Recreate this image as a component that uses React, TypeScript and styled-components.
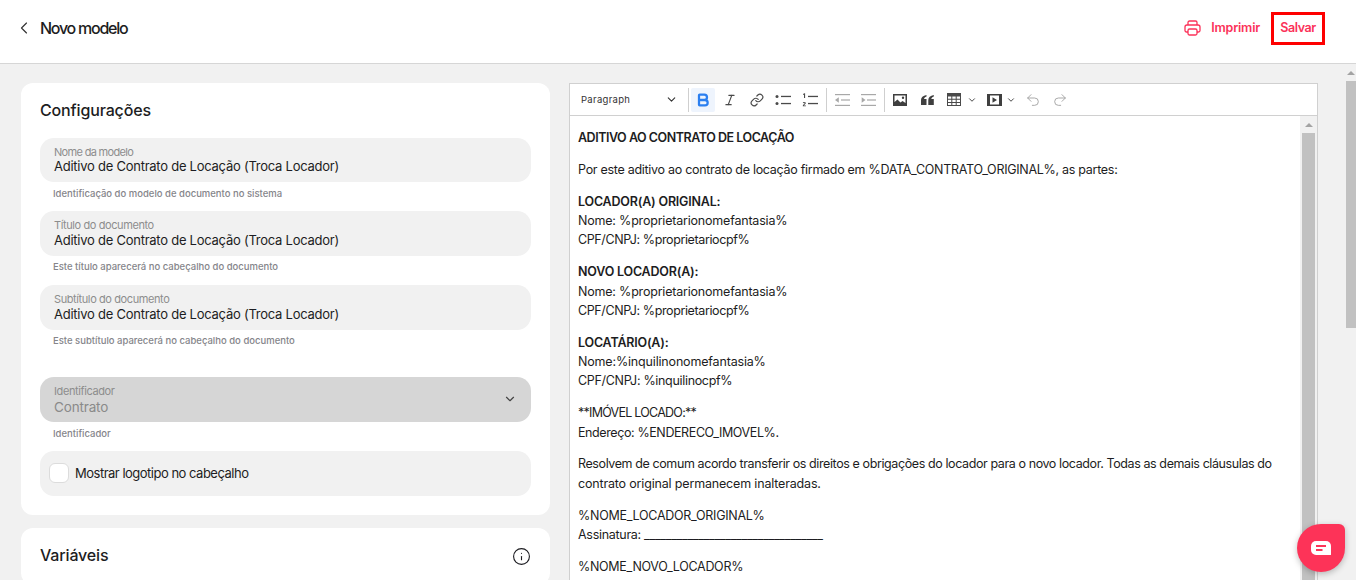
import React from "react";
import styled, { createGlobalStyle } from "styled-components";
import { ChevronLeft, ChevronDown, Info, Bold, Italic, Link, Undo2, Redo2 } from "lucide-react";

const Global = createGlobalStyle`
  html, body { margin: 0; padding: 0; height: 580px; overflow: hidden; background: #fff; }
  body { font-family: Inter, "Noto Sans", sans-serif; color: #1d1d22; }
  * { box-sizing: border-box; }
`;

const Shell = styled.div`
  width: 1356px; height: 580px; display: flex; flex-direction: column; overflow: hidden; position: relative;
`;
const Header = styled.header`
  height: 64px; flex: none; background: #fff; border-bottom: 1px solid #d6d6d6;
  display: flex; align-items: center; justify-content: space-between; padding: 0 31px 7px 14px;
`;
const HeaderLeft = styled.div`display: flex; align-items: center; gap: 6px;`;
const PageTitle = styled.h1`margin: 0; font-size: 16px; font-weight: 500; letter-spacing: -1.25px;`;
const HeaderRight = styled.div`display: flex; align-items: center; gap: 11px;`;
const PrintLink = styled.div`
  display: flex; align-items: center; gap: 10px; color: #fb3259; font-size: 12.5px; font-weight: 600; letter-spacing: -0.2px; padding-bottom: 1px;
`;
const SaveButton = styled.div`
  width: 54px; height: 33px; border: 3px solid #fe0000; display: flex; align-items: center; justify-content: center;
  color: #fb3259; font-size: 12.5px; font-weight: 600; letter-spacing: -0.4px; padding-bottom: 1px;
`;
const Body = styled.div`flex: 1; min-height: 0; display: flex; background: #f1f1f1;`;
const Content = styled.div`
  flex: 1; min-width: 0; display: flex; gap: 19px; padding: 19px 28px 0 21px; overflow: hidden;
`;
const LeftColumn = styled.div`width: 529px; flex: none; display: flex; flex-direction: column; gap: 13px;`;
const Card = styled.section`
  background: #fff; border-radius: 12px; padding: 18px 19px 19px;
`;
const CardTitle = styled.h2<{ $mb?: number }>`
  margin: 0 0 ${(p) => p.$mb ?? 0}px; font-size: 16px; font-weight: 500; letter-spacing: -0.15px; line-height: 18px;
`;
const CardHead = styled.div`display: flex; align-items: center; justify-content: space-between;`;
const Fields = styled.div`margin-top: 19px; display: flex; flex-direction: column;`;
const Field = styled.div<{ $h?: number; $bg?: string }>`
  height: ${(p) => p.$h ?? 45}px; border-radius: 14px; background: ${(p) => p.$bg ?? "#f1f1f1"};
  padding: 8px 14px 0; position: relative;
  display: flex; flex-direction: column;
`;
const FieldLabel = styled.div<{ $ls?: number }>`
  font-size: 11px; line-height: 13px; color: #8d8d8d; letter-spacing: ${(p) => p.$ls ?? -0.4}px;
`;
const FieldValue = styled.div<{ $muted?: boolean; $lh?: number }>`
  font-size: ${(p) => (p.$muted ? 13.5 : 13)}px; line-height: ${(p) => p.$lh ?? (p.$muted ? 19 : 17)}px;
  color: ${(p) => (p.$muted ? "#8a8a8a" : "#1d1d22")}; letter-spacing: ${(p) => (p.$muted ? "-0.15px" : "-0.25px")};
`;
const Helper = styled.div<{ $mb?: number; $pt?: number }>`
  font-size: 9.5px; line-height: 12px; color: #85858a; font-weight: 500; padding: ${(p) => p.$pt ?? 5}px 0 0 13px; margin-bottom: ${(p) => p.$mb ?? 12}px; height: 17px;
`;
const SelectArrow = styled.span`
  position: absolute; right: 14px; top: 15px; color: #444; display: flex;
`;
const CheckRow = styled.div`
  height: 45px; border-radius: 14px; background: #f1f1f1; display: flex; align-items: center; gap: 6px; padding: 0 9px 2px;
`;
const CheckBox = styled.span`
  width: 20px; height: 20px; border-radius: 6px; background: #fff; border: 1px solid #dcdcdc; flex: none;
`;
const CheckLabel = styled.span`font-size: 13px; letter-spacing: -0.5px; color: #1d1d22;`;
const InfoWrap = styled.span`display: flex; color: #1d1d22;`;

const Editor = styled.section`
  flex: 1; min-width: 0; height: 560px; background: #fff; border: 1px solid #d0d0d0; display: flex; flex-direction: column;
`;
const Toolbar = styled.div`
  height: 32px; flex: none; border-bottom: 1px solid #d0d0d0; display: flex; align-items: center; padding: 0 3px; color: #555;
`;
const Heading = styled.div`
  width: 112px; flex: none; display: flex; align-items: center; justify-content: space-between;
  font-size: 9.5px; color: #333; padding: 0 7px 0 8px; letter-spacing: 0.3px;
`;
const Sep = styled.span<{ $l?: number; $r?: number }>`
  width: 1px; height: 24px; background: #cfcfcf; flex: none; margin: 0 ${(p) => p.$r ?? 3}px 0 ${(p) => p.$l ?? 3}px;
`;
const ToolBtn = styled.span<{ $on?: boolean; $dim?: boolean; $w?: number; $gap?: number }>`
  width: ${(p) => p.$w ?? 24}px; height: 24px; flex: none; display: flex; align-items: center; justify-content: center; gap: ${(p) => p.$gap ?? 2}px;
  background: ${(p) => (p.$on ? "#eef4fd" : "transparent")};
  color: ${(p) => (p.$on ? "#2b7ff0" : p.$dim ? "#a3a3a3" : "#4a4a4a")};
  border-radius: 2px;
`;
const EditorBody = styled.div`flex: 1; min-height: 0; display: flex; overflow: hidden;`;
const Doc = styled.div`
  flex: 1; min-width: 0; padding: 12px 8px 0; font-size: 12.5px; line-height: 19.3px; color: #1d1d22; overflow: hidden; white-space: nowrap;
`;
const Para = styled.p`margin: 0 0 12.6px;`;
const Run = styled.span<{ $ls: number }>`letter-spacing: ${(p) => p.$ls}px;`;
const Strong = styled.strong<{ $ls?: number }>`font-weight: 600; letter-spacing: ${(p) => p.$ls ?? -0.2}px;`;
const Track = styled.div<{ $w: number; $bg: string }>`
  width: ${(p) => p.$w}px; flex: none; background: ${(p) => p.$bg}; display: flex; flex-direction: column; align-items: center;
`;
const ArrowUp = styled.span<{ $h: number }>`
  height: ${(p) => p.$h}px; flex: none; display: flex; align-items: center; justify-content: center;
  &::before { content: ""; border-left: 4px solid transparent; border-right: 4px solid transparent; border-bottom: 4px solid #a3a3a3; }
`;
const Thumb = styled.div<{ $h: number; $w: number }>`
  width: ${(p) => p.$w}px; height: ${(p) => p.$h}px; background: #c1c1c1; flex: none;
`;
const Fab = styled.div`
  position: absolute; left: 1297px; top: 524px; width: 48px; height: 48px; background: #fd3358;
  border-radius: 50% 6px 50% 50%; box-shadow: 0 2px 6px rgba(0,0,0,.25);
  display: flex; align-items: center; justify-content: center;
`;

function PrintIcon() { return <svg width="17" height="16" viewBox="0 0 17 16" fill="none" stroke="currentColor" strokeWidth="1.3"><path d="M4 5V2.500A1.500 1.500 0 0 1 5.500 1h6A1.500 1.500 0 0 1 13 2.500V5"/><path d="M4 12H2.500A1.500 1.500 0 0 1 1 10.500V7a2 2 0 0 1 2-2h11a2 2 0 0 1 2 2v3.500a1.500 1.500 0 0 1-1.500 1.500H13"/><rect x="4" y="9" width="9" height="6" rx="1.500"/></svg>; }
function ImgIcon() { return <svg width="14" height="12" viewBox="0 0 14 12"><path fillRule="evenodd" fill="#3f3f3f" d="M0 0h14v12H0zM1.500 1.500v6.500l3-2.500 3 3 2-1.500 3 2v-7.500zM10 2.500a1.200 1.200 0 1 1 0 2.400 1.200 1.200 0 0 1 0-2.400z"/></svg>; }
function QuoteIcon() { return <svg width="13" height="10" viewBox="0 0 13 10" fill="#3f3f3f"><path d="M5.500 0v1.600C4 2.100 3.200 3 3 4h2.500v6H0V5C0 2.500 2 .5 5.500 0zM12.800 0v1.600c-1.500.5-2.300 1.400-2.500 2.400h2.500v6H7.300V5C7.300 2.500 9.300.5 12.800 0z"/></svg>; }
function TableIcon() { return <svg width="14" height="13" viewBox="0 0 14 13"><path fill="#4a4a4a" fillRule="evenodd" d="M0 0h14v13H0zM1 3.500v2.300h3.300V3.500zM5.300 3.500v2.300h3.400V3.500zM9.700 3.500v2.300H13V3.500zM1 6.800v2.300h3.300V6.800zM5.300 6.800v2.300h3.400V6.800zM9.700 6.800v2.300H13V6.800zM1 10.100V12h3.300v-1.900zM5.300 10.100V12h3.400v-1.900zM9.700 10.100V12H13v-1.900z"/></svg>; }
function MediaIcon() { return <svg width="15" height="12" viewBox="0 0 15 12"><path fill="#3f3f3f" fillRule="evenodd" d="M0 0h15v12H0zM3 1.500v9h9v-9zM5.500 3.300l4.500 2.700-4.500 2.700z"/></svg>; }
function UL() { return <svg width="16" height="12" viewBox="0 0 16 12" fill="#4a4a4a"><circle cx="2" cy="2.500" r="1.500"/><circle cx="2" cy="9.500" r="1.500"/><rect x="6" y="1.800" width="10" height="1.300"/><rect x="6" y="8.900" width="10" height="1.300"/></svg>; }
function OL() { return <svg width="16" height="14" viewBox="0 0 16 14" fill="#4a4a4a"><rect x="6" y="2.800" width="10" height="1.300"/><rect x="6" y="9.900" width="10" height="1.300"/><path d="M1 1l1.500-.8h.6V5H2V1.500L1 2zM.8 9.500c.2-.8 2.800-1 3 .5 0 1-1.300 1.500-1.800 2.500h1.900v.8H.8v-.6c.3-1.200 1.900-1.700 1.900-2.600 0-.5-.8-.5-1.100.2z"/></svg>; }
function Outdent() { return <svg width="15" height="12" viewBox="0 0 15 12" fill="#a8a8a8"><rect x="0" y="0" width="15" height="1.200"/><rect x="0" y="10.800" width="15" height="1.200"/><rect x="6" y="5.400" width="9" height="1.200"/><path d="M0 6l3.800-2.800v5.600z"/></svg>; }
function Indent() { return <svg width="15" height="12" viewBox="0 0 15 12" fill="#a8a8a8"><rect x="0" y="0" width="15" height="1.200"/><rect x="0" y="10.800" width="15" height="1.200"/><rect x="6" y="5.400" width="9" height="1.200"/><path d="M4.500 6L.7 3.200v5.600z"/></svg>; }
function Chat() { return <svg width="20" height="14" viewBox="0 0 20 14"><path fill="#fff" d="M5 0h10a5 5 0 0 1 5 5v8.500c0 .5-.2.500-.5.500H5a5 5 0 0 1-5-5V5a5 5 0 0 1 5-5z"/><rect x="5" y="4" width="10" height="2" fill="#fd3358"/><rect x="5" y="8" width="6.500" height="2" fill="#fd3358"/></svg>; }

const NAME = "Aditivo de Contrato de Locação (Troca Locador)";

export default function App() {
  return (
    <Shell>
      <Global />
      <Header>
        <HeaderLeft>
          <ChevronLeft size={20} strokeWidth={1.4} color="#333" />
          <PageTitle>Novo modelo</PageTitle>
        </HeaderLeft>
        <HeaderRight>
          <PrintLink><PrintIcon />Imprimir</PrintLink>
          <SaveButton>Salvar</SaveButton>
        </HeaderRight>
      </Header>
      <Body>
        <Content>
          <LeftColumn>
            <Card>
              <CardTitle>Configurações</CardTitle>
              <Fields>
                <Field $h={44}><FieldLabel $ls={-0.68}>Nome da modelo</FieldLabel><FieldValue $lh={15}>{NAME}</FieldValue></Field>
                <Helper $pt={6}>Identificação do modelo de documento no sistema</Helper>
                <Field><FieldLabel>Título do documento</FieldLabel><FieldValue>{NAME}</FieldValue></Field>
                <Helper>Este título aparecerá no cabeçalho do documento</Helper>
                <Field><FieldLabel>Subtítulo do documento</FieldLabel><FieldValue>{NAME}</FieldValue></Field>
                <Helper $mb={30}>Este subtítulo aparecerá no cabeçalho do documento</Helper>
                <Field $bg="#d6d6d6"><FieldLabel>Identificador</FieldLabel><FieldValue $muted>Contrato</FieldValue>
                  <SelectArrow><ChevronDown size={14} /></SelectArrow></Field>
                <Helper $pt={6}>Identificador</Helper>
                <CheckRow><CheckBox /><CheckLabel>Mostrar logotipo no cabeçalho</CheckLabel></CheckRow>
              </Fields>
            </Card>
            <Card>
              <CardHead><CardTitle $mb={2}>Variáveis</CardTitle><InfoWrap><Info size={19} strokeWidth={1.4} /></InfoWrap></CardHead>
            </Card>
          </LeftColumn>
          <Editor>
            <Toolbar>
              <Heading>Paragraph<ChevronDown size={13} /></Heading>
              <Sep $r={2} />
              <ToolBtn $on><Bold size={16} strokeWidth={3.4} /></ToolBtn>
              <ToolBtn $w={30}><Italic size={14} /></ToolBtn>
              <ToolBtn $w={24}><Link size={14} /></ToolBtn>
              <ToolBtn $w={28}><UL /></ToolBtn>
              <ToolBtn $w={26}><OL /></ToolBtn>
              <Sep />
              <ToolBtn $dim $w={24}><Outdent /></ToolBtn>
              <ToolBtn $dim $w={28}><Indent /></ToolBtn>
              <Sep $l={2} $r={1} />
              <ToolBtn $w={28}><ImgIcon /></ToolBtn>
              <ToolBtn $w={26}><QuoteIcon /></ToolBtn>
              <ToolBtn $w={44} $gap={6}><TableIcon /><ChevronDown size={10} strokeWidth={2.4}/></ToolBtn>
              <ToolBtn $w={34} $gap={4}><MediaIcon /><ChevronDown size={10} strokeWidth={2.4}/></ToolBtn>
              <ToolBtn $dim $w={30}><Undo2 size={16} strokeWidth={1.4} /></ToolBtn>
              <ToolBtn $dim $w={24}><Redo2 size={16} strokeWidth={1.4} /></ToolBtn>
            </Toolbar>
            <EditorBody>
              <Doc>
                <Para><Strong $ls={-0.47}>ADITIVO AO CONTRATO DE LOCAÇÃO</Strong></Para>
                <Para><Run $ls={-0.29}>Por este aditivo ao contrato de locação firmado em %DATA_CONTRATO_ORIGINAL%, as partes:</Run></Para>
                <Para><Strong>LOCADOR(A) ORIGINAL:</Strong><br /><Run $ls={-0.2}>Nome: %proprietarionomefantasia%</Run><br /><Run $ls={-0.38}>CPF/CNPJ: %proprietariocpf%</Run></Para>
                <Para><Strong>NOVO LOCADOR(A):</Strong><br /><Run $ls={-0.2}>Nome: %proprietarionomefantasia%</Run><br /><Run $ls={-0.38}>CPF/CNPJ: %proprietariocpf%</Run></Para>
                <Para><Strong>LOCATÁRIO(A):</Strong><br /><Run $ls={-0.17}>Nome:%inquilinonomefantasia%</Run><br /><Run $ls={-0.32}>CPF/CNPJ: %inquilinocpf%</Run></Para>
                <Para><Run $ls={-0.75}>**IMÓVEL LOCADO:**</Run><br /><Run $ls={-0.4}>Endereço: %ENDERECO_IMOVEL%.</Run></Para>
                <Para><Run $ls={-0.4}>Resolvem de comum acordo transferir os direitos e obrigações do locador para o novo locador. Todas as demais cláusulas do</Run><br /><Run $ls={-0.17}>contrato original permanecem inalteradas.</Run></Para>
                <Para><Run $ls={-0.27}>%NOME_LOCADOR_ORIGINAL%</Run><br /><Run $ls={-0.29}>Assinatura: _________________________________</Run></Para>
                <Para><Run $ls={-0.3}>%NOME_NOVO_LOCADOR%</Run></Para>
              </Doc>
              <Track $w={17} $bg="#f1f1f1">
                <ArrowUp $h={17} />
                <Thumb $w={13} $h={460} />
              </Track>
            </EditorBody>
          </Editor>
        </Content>
        <Track $w={10} $bg="#f1f1f1">
          <ArrowUp $h={17} />
          <Thumb $w={10} $h={247} />
        </Track>
      </Body>
      <Fab><Chat /></Fab>
    </Shell>
  );
}
